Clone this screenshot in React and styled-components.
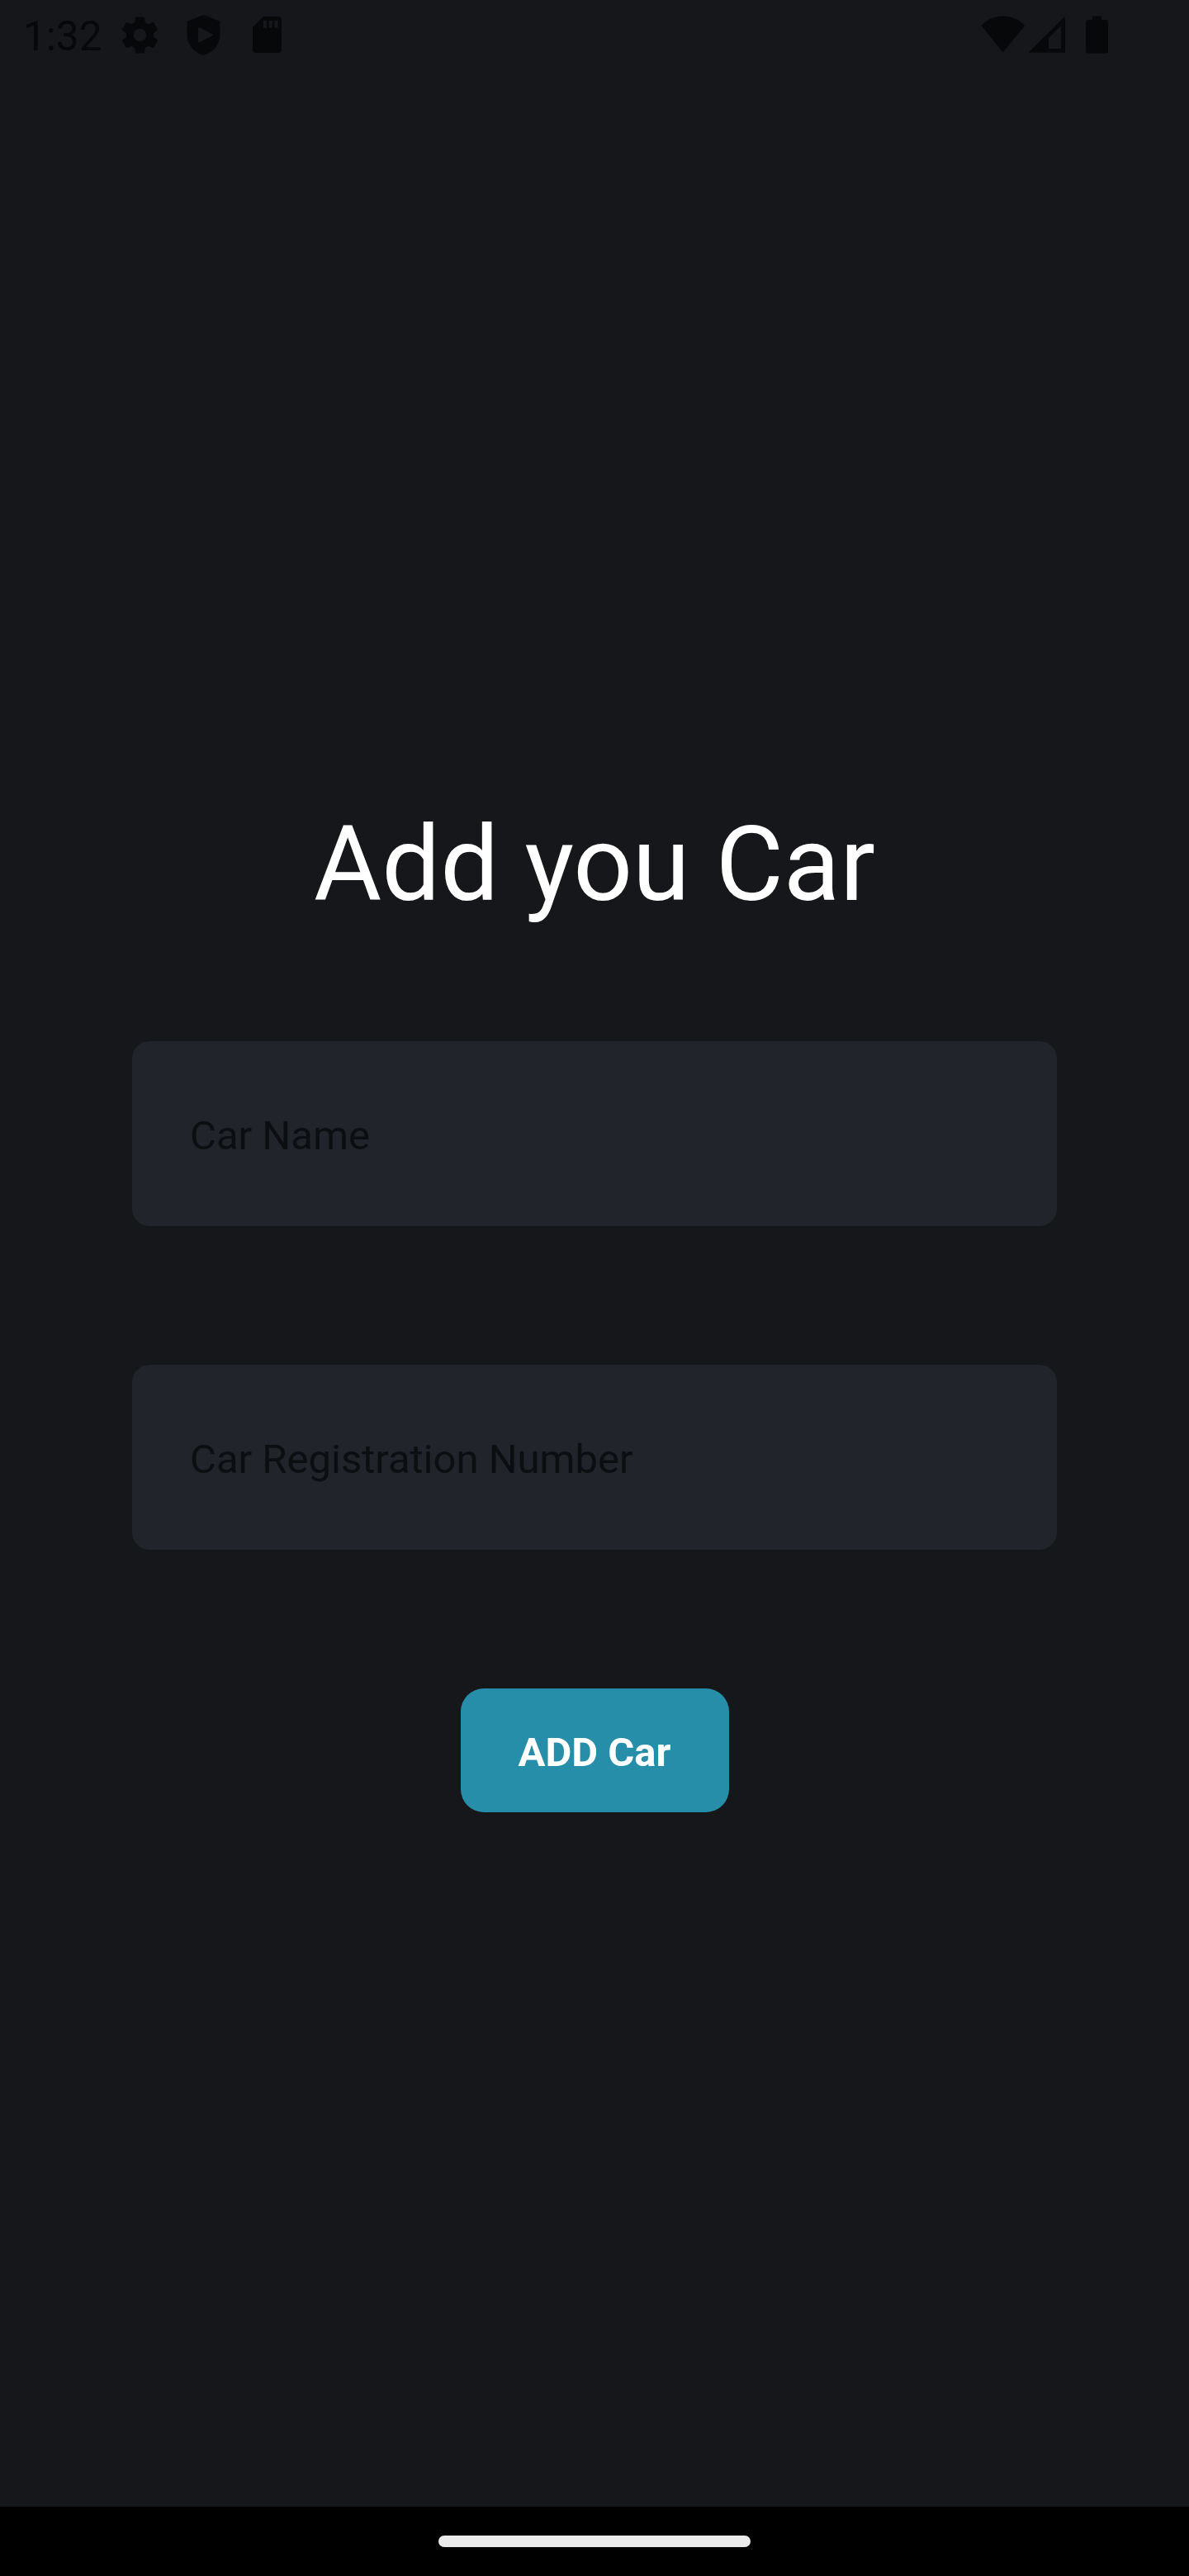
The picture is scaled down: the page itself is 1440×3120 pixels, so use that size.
import React from "react";
import styled, { createGlobalStyle } from "styled-components";

const GlobalStyle = createGlobalStyle`
  *, *::before, *::after { box-sizing: border-box; }
  body { margin: 0; background: #16171b; }
`;

const Screen = styled.div`
  display: flex;
  flex-direction: column;
  width: 1440px;
  height: 3120px;
  background: #16171b;
  font-family: Roboto, "Liberation Sans", sans-serif;
`;

const StatusBar = styled.header`
  display: flex;
  justify-content: space-between;
  height: 84px;
  padding: 0 98px 0 28px;
  color: #070809;
`;

const StatusGroup = styled.div`
  display: flex;
  align-items: center;
  gap: ${(p) => p.$gap}px;
`;

const Clock = styled.span`
  width: 97px;
  margin-top: 4px;
  font-size: 49.5px;
  line-height: 58px;
`;

const Icon = styled.svg`
  display: block;
  flex: none;
  fill: currentColor;
`;

const Form = styled.main`
  flex: 1;
  display: flex;
  flex-direction: column;
  align-items: center;
  padding-top: 889px;
`;

const Title = styled.h1`
  margin: 0 0 140px;
  font-size: 126px;
  line-height: 148px;
  font-weight: 400;
  color: #ffffff;
`;

const Field = styled.input`
  width: 1120px;
  height: 224px;
  margin: 0 0 168px;
  padding: 5px 70px 0;
  border: 0;
  border-radius: 21px;
  outline: 0;
  background: #22242c;
  font-family: inherit;
  font-size: 49px;
  color: #ffffff;
  &::placeholder {
    color: #0d0e11;
    opacity: 1;
  }
`;

const SubmitButton = styled.button`
  width: 325px;
  height: 150px;
  padding: 5px 0 0;
  border: 0;
  border-radius: 28px;
  background: #268ea8;
  font-family: inherit;
  font-size: 49px;
  font-weight: 700;
  color: #ffffff;
`;

const NavigationBar = styled.footer`
  display: flex;
  align-items: center;
  justify-content: center;
  height: 84px;
  background: #000000;
`;

const HomeHandle = styled.div`
  width: 378px;
  height: 14px;
  border-radius: 7px;
  background: #ebebeb;
`;

const GearIcon = () => (
  <Icon width="53" height="53" viewBox="0 0 24 24">
    <path d="M19.43 12.98c.04-.32.07-.64.07-.98s-.03-.66-.07-.98l2.11-1.65c.19-.15.24-.42.12-.64l-2-3.46c-.12-.22-.39-.3-.61-.22l-2.49 1c-.52-.4-1.08-.73-1.69-.98l-.38-2.65C14.46 2.18 14.25 2 14 2h-4c-.25 0-.46.18-.49.42l-.38 2.65c-.61.25-1.17.59-1.69.98l-2.49-1c-.23-.09-.49 0-.61.22l-2 3.46c-.13.22-.07.49.12.64l2.11 1.65c-.04.32-.07.65-.07.98s.03.66.07.98l-2.11 1.65c-.19.15-.24.42-.12.64l2 3.46c.12.22.39.3.61.22l2.49-1c.52.4 1.08.73 1.69.98l.38 2.65c.03.24.24.42.49.42h4c.25 0 .46-.18.49-.42l.38-2.65c.61-.25 1.17-.59 1.69-.98l2.49 1c.23.09.49 0 .61-.22l2-3.46c.12-.22.07-.49-.12-.64l-2.11-1.65zM12 15.5c-1.93 0-3.5-1.57-3.5-3.5s1.57-3.5 3.5-3.5 3.5 1.57 3.5 3.5-1.57 3.5-3.5 3.5z" />
  </Icon>
);

const ShieldIcon = () => (
  <Icon width="53" height="54" viewBox="0 -1 53 54">
    <path
      fillRule="evenodd"
      d="M26.5 2L45.500 9.500Q46.500 10 46.500 11V26C46.500 39 37 48 26.500 51C16 48 6.500 39 6.500 26V11Q6.500 10 7.500 9.500ZM22.200 17.500Q20 16.500 20 18.500V33.500Q20 36 22.200 35L36.500 27.500Q38.500 26.300 36.500 25.100Z"
    />
  </Icon>
);

const SdCardIcon = () => (
  <Icon width="53" height="54" viewBox="0 -1 53 54">
    <path
      fillRule="evenodd"
      d="M22 4H40Q44 4 44 8V44Q44 48 40 48H13Q9 48 9 44V17ZM22 9V17.700H26V9ZM28.700 9V17.700H32.700V9ZM35.300 9V17.700H39.700V9Z"
    />
  </Icon>
);

const WifiIcon = () => (
  <Icon width="54" height="46" viewBox="0 0 54 46">
    <path d="M26.700 44.500L0.500 12C7 4.500 16 0.500 26.700 0.500S46 4.500 53 12Z" />
  </Icon>
);

const SignalIcon = () => (
  <Icon width="45" height="46" viewBox="0 0 45 46">
    <path fillRule="evenodd" d="M0.500 44.700L45 0.700V44.700ZM25 27V40H40V12Z" />
  </Icon>
);

const BatteryIcon = () => (
  <Icon width="27" height="46" viewBox="0 0 27 46">
    <path d="M8 0.500H19V5H24Q27 5 27 8V42.500Q27 45.500 24 45.500H3Q0 45.500 0 42.500V8Q0 5 3 5H8Z" />
  </Icon>
);

export default function App() {
  return (
    <>
      <GlobalStyle />
      <Screen>
        <StatusBar>
          <StatusGroup $gap={18}>
            <Clock>1:32</Clock>
            <StatusGroup $gap={24}>
              <GearIcon />
              <ShieldIcon />
              <SdCardIcon />
            </StatusGroup>
          </StatusGroup>
          <StatusGroup $gap={25}>
            <StatusGroup $gap={3}>
              <WifiIcon />
              <SignalIcon />
            </StatusGroup>
            <BatteryIcon />
          </StatusGroup>
        </StatusBar>
        <Form>
          <Title>Add you Car</Title>
          <Field type="text" placeholder="Car Name" />
          <Field type="text" placeholder="Car Registration Number" />
          <SubmitButton type="button">ADD Car</SubmitButton>
        </Form>
        <NavigationBar>
          <HomeHandle />
        </NavigationBar>
      </Screen>
    </>
  );
}
